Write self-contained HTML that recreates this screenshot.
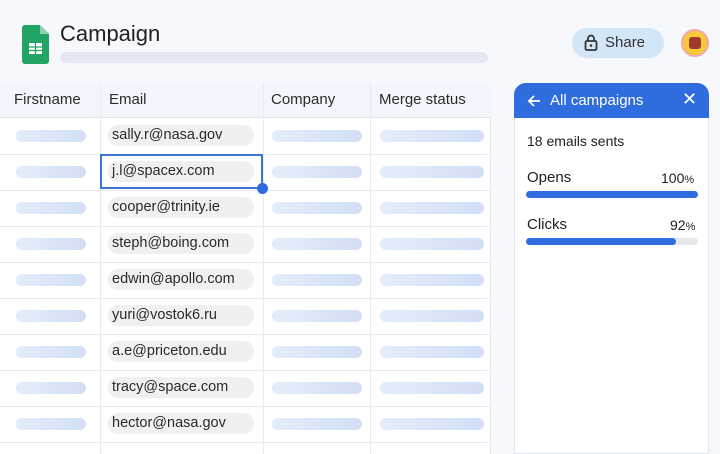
<!DOCTYPE html>
<html><head><meta charset="utf-8"><style>
*{margin:0;padding:0;box-sizing:border-box}
body{width:720px;height:454px;background:#f6f8fc;font-family:"Liberation Sans",sans-serif;position:relative;overflow:hidden;color:#202124}
.abs{position:absolute}
.table{left:0;top:83px;width:491px;height:371px;background:#fff;border-right:1px solid #e3e7ef;border-top-right-radius:8px}
.hdr{left:0;top:83px;width:491px;height:35px;background:#f3f6fc;border-bottom:1px solid #e3e7ef;border-top-right-radius:8px}
.th{top:91px;font-size:15px;color:#2b2b2b}
.vl{top:83px;width:1px;height:371px;background:#e8ebf2}
.hl{left:0;width:491px;height:1px;background:#e8ebf2}
.pill{height:12px;border-radius:6px;background:linear-gradient(90deg,#e3eefb,#d3def5)}
.chip{left:108px;width:146px;height:21px;border-radius:10px;background:#f0f0f0;font-size:14.5px;line-height:21px;padding-left:4px;color:#2a2a2a}
</style></head><body>
<svg class="abs" style="left:22px;top:25px" width="27" height="39" viewBox="0 0 27 39"><path d="M3 0h15l9 9v27a3 3 0 0 1-3 3H3a3 3 0 0 1-3-3V3a3 3 0 0 1 3-3z" fill="#21a464"/><path d="M18 0v9h9z" fill="#8ed1b1"/><rect x="7" y="18" width="13" height="11" fill="#fff"/><path d="M7 22h13M7 25.5h13M13.5 18v11" stroke="#21a464" stroke-width="1.3"/></svg>
<div class="abs" style="left:60px;top:21px;font-size:22px;color:#202124">Campaign</div>
<div class="abs" style="left:60px;top:52px;width:428px;height:11px;border-radius:6px;background:#e3e8f4"></div>
<div class="abs" style="left:572px;top:28px;width:92px;height:30px;border-radius:15px;background:#d3e6f8"></div>
<svg class="abs" style="left:584px;top:34px" width="14" height="17" viewBox="0 0 14 17"><rect x="1.5" y="7" width="11" height="9" rx="1.5" fill="none" stroke="#333" stroke-width="1.8"/><path d="M4 7V4.5a3 3 0 0 1 6 0V7" fill="none" stroke="#333" stroke-width="1.8"/><circle cx="7" cy="11.5" r="1.3" fill="#333"/></svg>
<div class="abs" style="left:605px;top:34px;font-size:15px;color:#333">Share</div>
<div class="abs" style="left:681px;top:29px;width:28px;height:28px;border-radius:50%;background:#f6c938;border:2px solid #f2a7b3"></div>
<div class="abs" style="left:689px;top:37px;width:12px;height:12px;border-radius:3px;background:#a03a2c"></div>

<div class="abs table"></div>
<div class="abs hdr"></div>
<div class="abs th" style="left:14px">Firstname</div>
<div class="abs th" style="left:109px">Email</div>
<div class="abs th" style="left:271px">Company</div>
<div class="abs th" style="left:379px">Merge status</div>
<div class="abs vl" style="left:100px"></div>
<div class="abs vl" style="left:263px"></div>
<div class="abs vl" style="left:370px"></div>

<div class="abs hl" style="top:154px"></div><div class="abs hl" style="top:190px"></div><div class="abs hl" style="top:226px"></div><div class="abs hl" style="top:262px"></div><div class="abs hl" style="top:298px"></div><div class="abs hl" style="top:334px"></div><div class="abs hl" style="top:370px"></div><div class="abs hl" style="top:406px"></div><div class="abs hl" style="top:442px"></div>

<div class="abs pill" style="left:16px;top:130px;width:70px"></div><div class="abs pill" style="left:272px;top:130px;width:90px"></div><div class="abs pill" style="left:380px;top:130px;width:104px"></div>
<div class="abs chip" style="top:125px">sally.r@nasa.gov</div>
<div class="abs pill" style="left:16px;top:166px;width:70px"></div><div class="abs pill" style="left:272px;top:166px;width:90px"></div><div class="abs pill" style="left:380px;top:166px;width:104px"></div>
<div class="abs chip" style="top:161px">j.l@spacex.com</div>
<div class="abs" style="left:100px;top:154px;width:163px;height:35px;border:2px solid #3d74d6"></div>
<div class="abs" style="left:257px;top:183px;width:11px;height:11px;border-radius:50%;background:#2f6bdf"></div>
<div class="abs pill" style="left:16px;top:202px;width:70px"></div><div class="abs pill" style="left:272px;top:202px;width:90px"></div><div class="abs pill" style="left:380px;top:202px;width:104px"></div>
<div class="abs chip" style="top:197px">cooper@trinity.ie</div>
<div class="abs pill" style="left:16px;top:238px;width:70px"></div><div class="abs pill" style="left:272px;top:238px;width:90px"></div><div class="abs pill" style="left:380px;top:238px;width:104px"></div>
<div class="abs chip" style="top:233px">steph@boing.com</div>
<div class="abs pill" style="left:16px;top:274px;width:70px"></div><div class="abs pill" style="left:272px;top:274px;width:90px"></div><div class="abs pill" style="left:380px;top:274px;width:104px"></div>
<div class="abs chip" style="top:269px">edwin@apollo.com</div>
<div class="abs pill" style="left:16px;top:310px;width:70px"></div><div class="abs pill" style="left:272px;top:310px;width:90px"></div><div class="abs pill" style="left:380px;top:310px;width:104px"></div>
<div class="abs chip" style="top:305px">yuri@vostok6.ru</div>
<div class="abs pill" style="left:16px;top:346px;width:70px"></div><div class="abs pill" style="left:272px;top:346px;width:90px"></div><div class="abs pill" style="left:380px;top:346px;width:104px"></div>
<div class="abs chip" style="top:341px">a.e@priceton.edu</div>
<div class="abs pill" style="left:16px;top:382px;width:70px"></div><div class="abs pill" style="left:272px;top:382px;width:90px"></div><div class="abs pill" style="left:380px;top:382px;width:104px"></div>
<div class="abs chip" style="top:377px">tracy@space.com</div>
<div class="abs pill" style="left:16px;top:418px;width:70px"></div><div class="abs pill" style="left:272px;top:418px;width:90px"></div><div class="abs pill" style="left:380px;top:418px;width:104px"></div>
<div class="abs chip" style="top:413px">hector@nasa.gov</div>

<div class="abs" style="left:514px;top:83px;width:195px;height:371px;background:#fff;border-radius:12px 12px 0 0;border:1px solid #e3e7ef"></div>
<div class="abs" style="left:514px;top:83px;width:195px;height:35px;background:#2f6cdd;border-radius:12px 12px 0 0"></div>
<svg class="abs" style="left:527px;top:94px" width="14" height="14" viewBox="0 0 14 14"><path d="M13 7H2M7 2L2 7l5 5" fill="none" stroke="#fff" stroke-width="1.8"/></svg>
<div class="abs" style="left:550px;top:92px;font-size:15px;color:#fff">All campaigns</div>
<div class="abs" style="left:682px;top:89px;font-size:18px;color:#fff">&#10005;</div>
<div class="abs" style="left:527px;top:133px;font-size:14px">18 emails sents</div>
<div class="abs" style="left:527px;top:169px;font-size:15px">Opens</div>
<div class="abs" style="left:661px;top:170px;font-size:14px">100<span style="font-size:11px">%</span></div>
<div class="abs" style="left:526px;top:191px;width:172px;height:7px;border-radius:4px;background:#2f6cdd"></div>
<div class="abs" style="left:527px;top:216px;font-size:15px">Clicks</div>
<div class="abs" style="left:670px;top:217px;font-size:14px">92<span style="font-size:11px">%</span></div>
<div class="abs" style="left:526px;top:238px;width:172px;height:7px;border-radius:4px;background:#e6e8ec"></div>
<div class="abs" style="left:526px;top:238px;width:150px;height:7px;border-radius:4px;background:#2f6cdd"></div>
</body></html>
